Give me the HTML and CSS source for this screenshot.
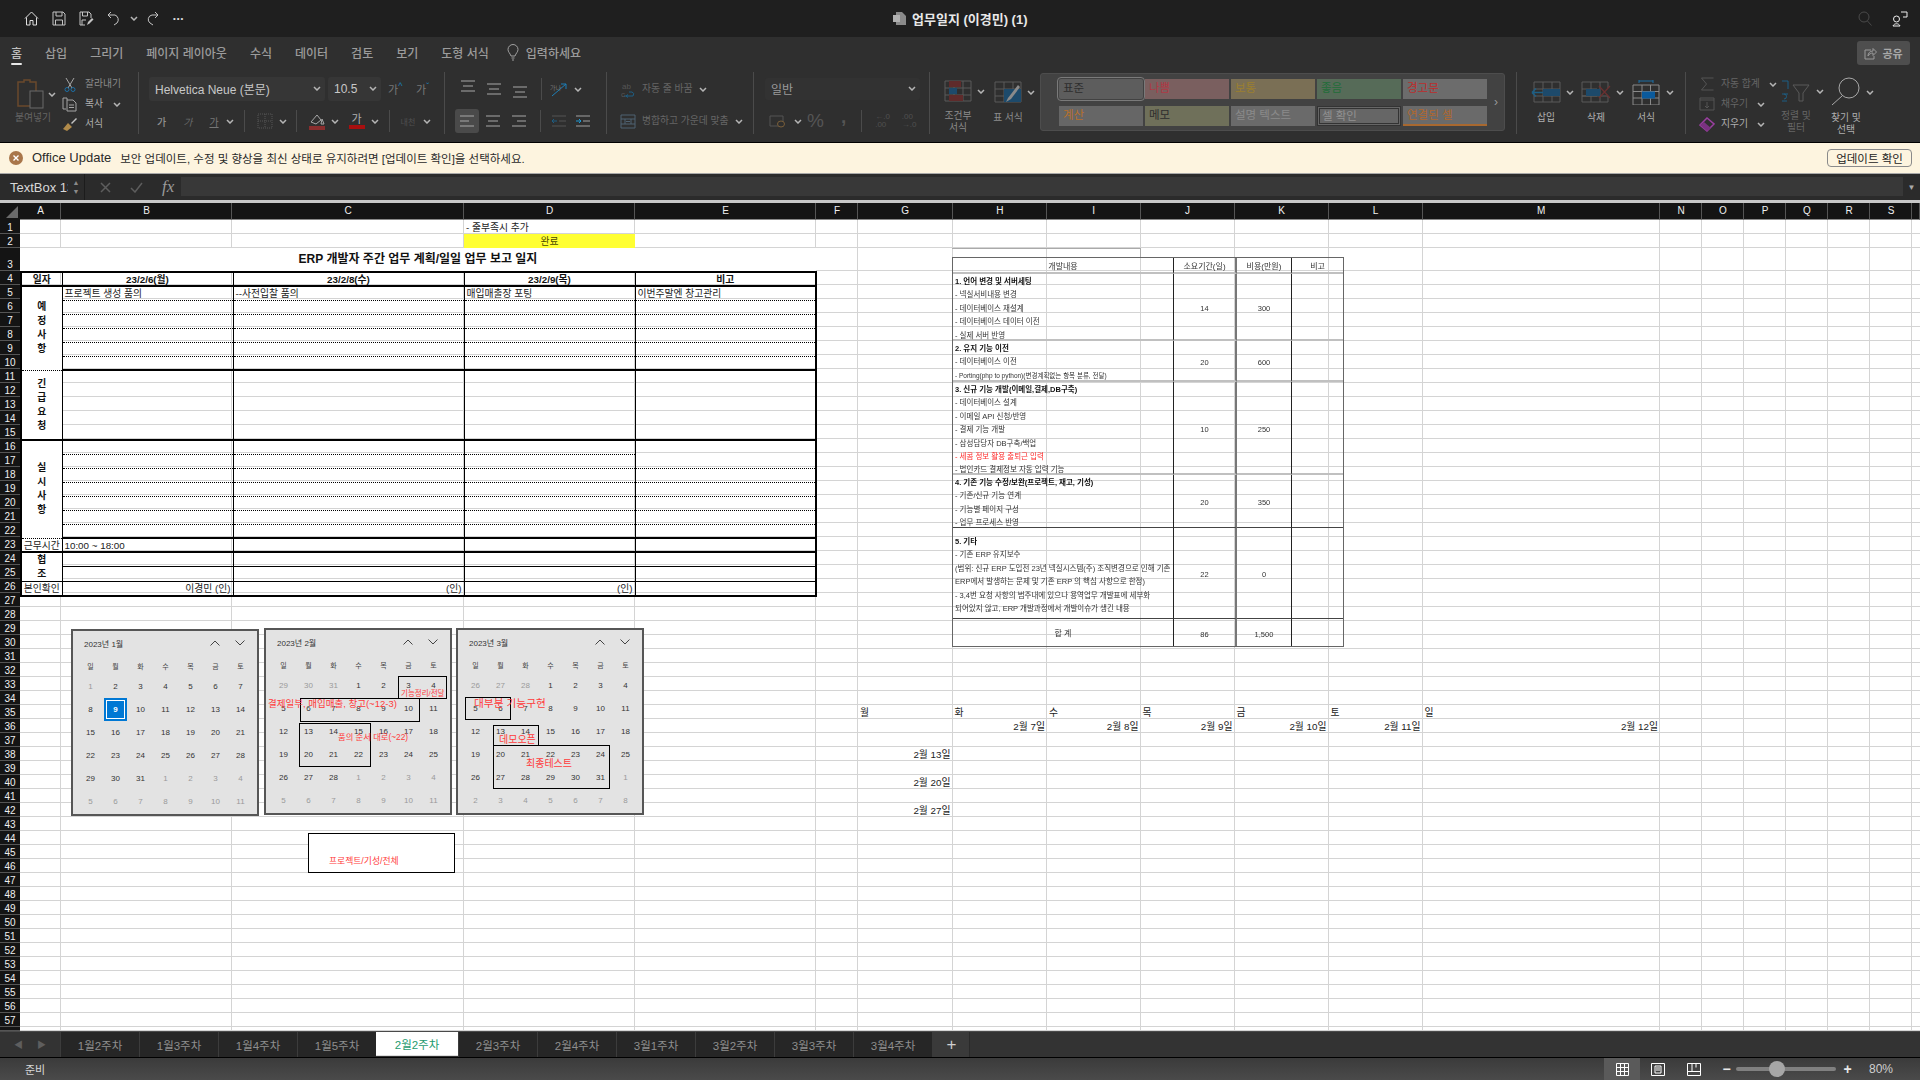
FILE: index.html
```html
<!DOCTYPE html>
<html lang="ko">
<head>
    <meta charset="UTF-8">
    <title>업무일지 (이경민) (1)</title>
    <link rel="stylesheet" href="styles.css">
</head>
<body>
<svg class="defs" width="0" height="0">
    <symbol id="chev" viewBox="0 0 8 5"><path d="M1 1l3 3 3-3" fill="none" stroke="#b5b5b5" stroke-width="1.5"/></symbol>
    <symbol id="lines-l" viewBox="0 0 16 14"><path d="M1 2h14M1 7h9M1 12h14" stroke="#a8a8a8" fill="none"/></symbol>
    <symbol id="lines-c" viewBox="0 0 16 14"><path d="M1 2h14M3 7h10M1 12h14" stroke="#a8a8a8" fill="none"/></symbol>
    <symbol id="lines-r" viewBox="0 0 16 14"><path d="M1 2h14M6 7h9M1 12h14" stroke="#a8a8a8" fill="none"/></symbol>
</svg>

<header class="titlebar">
    <div class="quick">
        <svg class="q-home" width="15" height="15" viewBox="0 0 15 15"><path d="M1 7.500L7.500 1 14 7.500M2.500 6.500V14h3.500V9.500h3V14h3.500V6.500" fill="none" stroke="#e0e0e0"/></svg>
        <svg class="q-save" width="14" height="15" viewBox="0 0 14 15"><path d="M1 1h10l2 2v11H1zM4 1v4h6V1M3.500 14V9h7v5" fill="none" stroke="#c4c4c4"/></svg>
        <svg class="q-saveas" width="15" height="15" viewBox="0 0 15 15"><path d="M1 1h9l2 2v4M6 14H1V1M3.500 1v4h5V1M3 14V9h4" fill="none" stroke="#c4c4c4"/><path d="M8 14l1-3 4-4 1.500 1.500-4 4z" fill="#c4c4c4"/></svg>
        <svg class="q-undo" width="15" height="15" viewBox="0 0 15 15"><path d="M1 4h7a5 5 0 0 1 2 8l-3 2M1 4l3-3M1 4l3 3" fill="none" stroke="#c4c4c4"/></svg>
        <svg class="chev q-chev"><use href="#chev"/></svg>
        <svg class="q-redo" width="13" height="15" viewBox="0 0 13 15"><path d="M12 4H6a4.500 4.500 0 0 0-2 8l3 2M12 4L9 1M12 4L9 7" fill="none" stroke="#c4c4c4"/></svg>
        <span class="q-dots">•••</span>
    </div>
    <div class="doc-name">
        <svg width="13" height="13" viewBox="0 0 13 13"><path d="M3 0h6l4 4v9H3z" fill="#8a8a8a"/><rect y="3" width="7" height="7" fill="#b0b0b0"/></svg>
        업무일지 (이경민) (1)
    </div>
    <div class="title-right">
        <svg width="14" height="15" viewBox="0 0 14 15"><circle cx="6" cy="6" r="5" fill="none" stroke="#4a4a4a"/><path d="M9.500 10l4 4.500" stroke="#4a4a4a"/></svg>
        <svg width="16" height="17" viewBox="0 0 16 17"><circle cx="4.500" cy="9" r="3" fill="none" stroke="#eee"/><path d="M1 16c1-3 6-3 7 0zM9 2h6v5h-4" fill="none" stroke="#eee"/></svg>
    </div>
</header>

<section class="ribbon">
    <nav class="ribbon-tabs">
        <a class="on">홈</a><a>삽입</a><a>그리기</a><a>페이지 레이아웃</a><a>수식</a><a>데이터</a><a>검토</a><a>보기</a><a>도형 서식</a>
        <a class="tell">
            <svg width="12" height="17" viewBox="0 0 12 17"><path d="M4 12C3 9 1 8 1 5.500a5 5 0 0 1 10 0C11 8 9 9 8 12zM4.500 14h3M5 16h2" fill="none" stroke="#a0a0a0"/></svg>
            입력하세요
        </a>
        <span class="share">
            <svg width="13" height="13" viewBox="0 0 13 13"><path d="M4 9c0-3 2-5 5-5V1.500L12.500 5 9 8.500V6C7 6 5 7 4 9zM7 3H1v9h9V9" fill="none" stroke="#9a9a9a"/></svg>
            공유
        </span>
    </nav>

    <div class="ribbon-body">
        <div class="grp g-clip">
            <div class="paste">
                <div class="paste-top">
                    <svg width="28" height="30" viewBox="0 0 28 30"><path d="M1 3h6V1h6v2h6v24H1z" fill="none" stroke="#6b4a2c" stroke-width="1.500"/><rect x="13" y="12" width="13" height="17" fill="#2e2e2e" stroke="#6a6a6a"/></svg>
                    <svg class="chev"><use href="#chev"/></svg>
                </div>
                <span class="lbl dim">붙여넣기</span>
            </div>
            <div class="clip-list">
                <div class="clip-row">
                    <svg width="12" height="15" viewBox="0 0 12 15"><path d="M2 1l6 10M10 1L4 11" stroke="#a5a5a5" fill="none"/><circle cx="3" cy="12.500" r="2" fill="none" stroke="#1d6fa5"/><circle cx="9" cy="12.500" r="2" fill="none" stroke="#1d6fa5"/></svg>
                    <span class="lbl">잘라내기</span>
                </div>
                <div class="clip-row">
                    <svg width="16" height="15" viewBox="0 0 16 15"><path d="M5 3V1H1v11h3M5 3h6l3 3v8H5zM7 8h5M7 10.500h5" fill="none" stroke="#a5a5a5"/></svg>
                    <span class="lbl bright">복사</span><svg class="chev"><use href="#chev"/></svg>
                </div>
                <div class="clip-row">
                    <svg width="16" height="15" viewBox="0 0 16 15"><path d="M1 12l5-6 4 4-5 4z" fill="#b08a4a"/><path d="M9 6l5-5 1 1-5 5z" fill="#c4c4c4"/></svg>
                    <span class="lbl bright">서식</span>
                </div>
            </div>
        </div>

        <div class="grp g-font">
            <div class="g-row">
                <span class="select sel-font">Helvetica Neue (본문)<svg class="chev"><use href="#chev"/></svg></span>
                <span class="select sel-size">10.5<svg class="chev"><use href="#chev"/></svg></span>
                <span class="grow">가<sup>^</sup></span>
                <span class="grow">가<sup>ˇ</sup></span>
            </div>
            <div class="g-row font-tools">
                <b class="fmt">가</b><i class="fmt">가</i><u class="fmt">가</u>
                <svg class="chev"><use href="#chev"/></svg>
                <span class="sep s1"></span>
                <svg class="b-ico" width="16" height="16" viewBox="0 0 16 16"><path d="M1 1h14v14H1zM8 1v14M1 8h14" fill="none" stroke="#565656" stroke-dasharray="1 1"/></svg>
                <svg class="chev"><use href="#chev"/></svg>
                <span class="sep s2"></span>
                <span class="paint">
                    <svg width="16" height="13" viewBox="0 0 16 13"><path d="M2 9l6-7 4 5-5 4zM13 6l2 5h-3z" fill="none" stroke="#a8a8a8"/></svg>
                    <em class="bar bar-fill"></em>
                </span>
                <svg class="chev"><use href="#chev"/></svg>
                <span class="paint p-text">가<em class="bar bar-text"></em></span>
                <svg class="chev"><use href="#chev"/></svg>
                <span class="sep s3"></span>
                <span class="phon">내천</span>
                <svg class="chev"><use href="#chev"/></svg>
            </div>
        </div>

        <div class="grp g-align">
            <div class="g-row align-top">
                <svg class="va-t" width="16" height="14"><use href="#lines-c"/></svg>
                <svg width="16" height="14"><use href="#lines-c"/></svg>
                <svg class="va-b" width="16" height="14"><use href="#lines-c"/></svg>
                <span class="sep"></span>
                <svg class="orient" width="18" height="15" viewBox="0 0 18 15"><path d="M2 14L16 2M11 2h5v5" fill="none" stroke="#1d7fb8"/><text x="0" y="8" class="orient-txt">가나</text></svg>
                <svg class="chev orient-chev"><use href="#chev"/></svg>
            </div>
            <div class="g-row align-bot">
                <span class="al-on"><svg width="16" height="14"><use href="#lines-l"/></svg></span>
                <svg width="16" height="14"><use href="#lines-c"/></svg>
                <svg width="16" height="14"><use href="#lines-r"/></svg>
                <span class="sep"></span>
                <svg class="ind" width="15" height="14" viewBox="0 0 15 14"><path d="M1 2h14M8 7h7M1 12h14" stroke="#555" fill="none"/><path d="M6 7H1l2-2M1 7l2 2" stroke="#1d5f85" fill="none"/></svg>
                <svg class="ind ind-2" width="15" height="14" viewBox="0 0 15 14"><path d="M1 2h14M8 7h7M1 12h14" stroke="#a0a0a0" fill="none"/><path d="M1 7h5L4 5M6 7L4 9" stroke="#1d9ad6" fill="none"/></svg>
            </div>
        </div>

        <div class="grp g-wrap">
            <div class="g-row">
                <svg width="16" height="17" viewBox="0 0 16 17"><path d="M4 15h9q2-3-1-4H9M6 15l2-1.500M6 15l2 1.500" fill="none" stroke="#1d5f85"/><text x="2" y="8" class="abc">ab</text><text x="1" y="16" class="abc">c</text></svg>
                <span class="lbl dim">자동 줄 바꿈</span><svg class="chev"><use href="#chev"/></svg>
            </div>
            <div class="g-row">
                <svg width="16" height="15" viewBox="0 0 16 15"><path d="M1 1h14v13H1zM1 5h14M1 10h14M5 5v5M11 5v5M6 7.500h4" fill="none" stroke="#4f6272"/></svg>
                <span class="lbl dim">병합하고 가운데 맞춤</span><svg class="chev"><use href="#chev"/></svg>
            </div>
        </div>

        <div class="grp g-num">
            <div class="g-row">
                <span class="select sel-num">일반<svg class="chev"><use href="#chev"/></svg></span>
            </div>
            <div class="g-row num-tools">
                <svg width="16" height="13" viewBox="0 0 16 13"><path d="M1 1h13v10H1z" fill="none" stroke="#555"/><ellipse cx="12" cy="9" rx="3.500" ry="3" fill="#2e2e2e" stroke="#7a5f3a"/></svg>
                <svg class="chev"><use href="#chev"/></svg>
                <span class="pct">%</span>
                <span class="comma">,</span>
                <span class="sep"></span>
                <span class="dec"><em>←.0</em><em>.00</em></span>
                <span class="dec"><em>.00</em><em>→.0</em></span>
            </div>
        </div>

        <div class="grp g-style">
            <div class="big b-cond">
                <div class="big-top">
                    <svg width="28" height="22" viewBox="0 0 28 22"><path d="M1 1h26v20H1zM1 8h26M1 15h26M10 1v20M19 1v20" fill="none" stroke="#5a5a5a"/><rect x="5" y="1" width="12" height="6" fill="#5f2b2b"/><rect x="5" y="8" width="8" height="6" fill="#1d4a6b"/><rect x="5" y="15" width="14" height="6" fill="#5f2b2b"/></svg>
                    <svg class="chev"><use href="#chev"/></svg>
                </div>
                <span class="lbl">조건부<br>서식</span>
            </div>
            <div class="big b-table">
                <div class="big-top">
                    <svg width="28" height="22" viewBox="0 0 28 22"><path d="M1 1h26v20H1zM1 8h26M1 15h26M10 1v20M19 1v20" fill="none" stroke="#5a5a5a"/><rect x="10" y="8" width="17" height="13" fill="#1d4a6b"/><path d="M12 21l2-4 10-13 2 2-9 12z" fill="#8a8a8a"/></svg>
                    <svg class="chev"><use href="#chev"/></svg>
                </div>
                <span class="lbl">표 서식</span>
            </div>
            <div class="gallery">
                <div class="styles">
                    <span class="st st-norm">표준</span><span class="st st-bad">나쁨</span><span class="st st-mid">보통</span><span class="st st-good">좋음</span><span class="st st-warn">경고문</span>
                    <span class="st st-calc">계산</span><span class="st st-memo">메모</span><span class="st st-note">설명 텍스트</span><span class="st st-check">셀 확인</span><span class="st st-link">연결된 셀</span>
                </div>
                <span class="more">›</span>
            </div>
        </div>

        <div class="grp g-cells">
            <div class="big">
                <div class="big-top">
                    <svg width="30" height="22" viewBox="0 0 30 22"><path d="M3 1h26v20H3zM3 8h26M3 15h26M12 1v20M21 1v20" fill="none" stroke="#5a5a5a"/><rect x="12" y="8" width="17" height="7" fill="#1d4a6b"/><path d="M1 11.500h11M1 11.500l4-4M1 11.500l4 4" fill="none" stroke="#1d5f85" stroke-width="1.500"/></svg>
                    <svg class="chev"><use href="#chev"/></svg>
                </div>
                <span class="lbl bright">삽입</span>
            </div>
            <div class="big">
                <div class="big-top">
                    <svg width="30" height="22" viewBox="0 0 30 22"><path d="M1 1h26v6M1 15h26v6H1V1M10 1v20M19 1v20M1 8h15M1 15h15" fill="none" stroke="#5a5a5a"/><rect x="5" y="8" width="14" height="7" fill="#1d4a6b"/><path d="M18 5l11 12M29 5L18 17" stroke="#6b3030" stroke-width="1.200"/></svg>
                    <svg class="chev"><use href="#chev"/></svg>
                </div>
                <span class="lbl bright">삭제</span>
            </div>
            <div class="big">
                <div class="big-top">
                    <svg width="30" height="25" viewBox="0 0 30 25"><path d="M8 1h14M8 0v3M22 0v3" stroke="#1d6fa5" fill="none"/><path d="M2 5h26v20H2zM2 11.500h26M2 18h26M11 5v20M19.500 5v20" fill="none" stroke="#8a8a8a"/><rect x="11" y="11.500" width="13" height="7" fill="#0a5a9c"/></svg>
                    <svg class="chev"><use href="#chev"/></svg>
                </div>
                <span class="lbl bright">서식</span>
            </div>
        </div>

        <div class="g-edit">
            <div class="edit-list">
                <div class="clip-row">
                    <svg width="15" height="14" viewBox="0 0 15 14"><path d="M14 1H2l5 6-5 6h12" fill="none" stroke="#555"/></svg>
                    <span class="lbl dim">자동 합계</span><svg class="chev"><use href="#chev"/></svg>
                </div>
                <div class="clip-row">
                    <svg width="16" height="14" viewBox="0 0 16 14"><path d="M1 1h14v12H1zM1 3h14M8 5v6M6 9l2 2 2-2" fill="none" stroke="#555"/></svg>
                    <span class="lbl dim">채우기</span><svg class="chev"><use href="#chev"/></svg>
                </div>
                <div class="clip-row">
                    <svg width="16" height="15" viewBox="0 0 16 15"><path d="M1 8l7-7 7 6-7 7z" fill="none" stroke="#9a3fa0" stroke-width="1.500"/><path d="M5 5l7 6-4 3-7-6z" fill="#7a3280"/></svg>
                    <span class="lbl bright">지우기</span><svg class="chev"><use href="#chev"/></svg>
                </div>
            </div>
            <div class="big">
                <div class="big-top">
                    <svg width="30" height="22" viewBox="0 0 30 22"><path d="M1 1h6v8M1 14h6M1 21h5M3 14a2.500 2.500 0 0 1 0 5" fill="none" stroke="#1d5f85"/><path d="M12 5h16l-6 8v8h-4v-8z" fill="none" stroke="#5a5a5a"/></svg>
                    <svg class="chev"><use href="#chev"/></svg>
                </div>
                <span class="lbl dim">정렬 및<br>필터</span>
            </div>
            <div class="big">
                <div class="big-top">
                    <svg width="30" height="30" viewBox="0 0 30 30"><circle cx="18" cy="11" r="10" fill="none" stroke="#a8a8a8"/><path d="M11 19L1 28" stroke="#a8a8a8"/></svg>
                    <svg class="chev"><use href="#chev"/></svg>
                </div>
                <span class="lbl bright">찾기 및<br>선택</span>
            </div>
        </div>
    </div>
</section>

<section class="update-bar">
    <svg width="14" height="14" viewBox="0 0 14 14"><circle cx="7" cy="7" r="7" fill="#a9764a"/><path d="M4.500 4.500l5 5M9.500 4.500l-5 5" stroke="#fff" stroke-width="1.400"/></svg>
    <strong>Office Update</strong>
    <span>보안 업데이트, 수정 및 향상을 최신 상태로 유지하려면 [업데이트 확인]을 선택하세요.</span>
    <button>업데이트 확인</button>
</section>

<section class="formula-bar">
    <div class="name-box"><span>TextBox 13</span></div>
    <div class="spin"><i>▲</i><i>▼</i></div>
    <div class="fx-btns">
        <svg width="11" height="11" viewBox="0 0 11 11"><path d="M1 1l9 9M10 1l-9 9" stroke="#5d5d5d" stroke-width="1.500"/></svg>
        <svg width="13" height="11" viewBox="0 0 13 11"><path d="M1 6l4 4 7-9" fill="none" stroke="#5d5d5d" stroke-width="1.500"/></svg>
        <em>fx</em>
    </div>
    <div class="fx-input"></div>
    <span class="fx-drop">▼</span>
</section>

<main class="sheet">
    <div class="corner"></div>
    <div class="ch">A</div><div class="ch">B</div><div class="ch">C</div><div class="ch">D</div><div class="ch">E</div><div class="ch">F</div><div class="ch">G</div><div class="ch">H</div><div class="ch">I</div><div class="ch">J</div><div class="ch">K</div><div class="ch">L</div><div class="ch">M</div><div class="ch">N</div><div class="ch">O</div><div class="ch">P</div><div class="ch">Q</div><div class="ch">R</div><div class="ch">S</div><div class="ch ch-end"></div>

    <div class="rh">1</div><div class="rh">2</div><div class="rh rh-tall">3</div><div class="rh">4</div><div class="rh">5</div><div class="rh">6</div><div class="rh">7</div><div class="rh">8</div><div class="rh">9</div><div class="rh">10</div>
    <div class="rh">11</div><div class="rh">12</div><div class="rh">13</div><div class="rh">14</div><div class="rh">15</div><div class="rh">16</div><div class="rh">17</div><div class="rh">18</div><div class="rh">19</div><div class="rh">20</div>
    <div class="rh">21</div><div class="rh">22</div><div class="rh">23</div><div class="rh">24</div><div class="rh">25</div><div class="rh">26</div><div class="rh">27</div><div class="rh">28</div><div class="rh">29</div><div class="rh">30</div>
    <div class="rh">31</div><div class="rh">32</div><div class="rh">33</div><div class="rh">34</div><div class="rh">35</div><div class="rh">36</div><div class="rh">37</div><div class="rh">38</div><div class="rh">39</div><div class="rh">40</div>
    <div class="rh">41</div><div class="rh">42</div><div class="rh">43</div><div class="rh">44</div><div class="rh">45</div><div class="rh">46</div><div class="rh">47</div><div class="rh">48</div><div class="rh">49</div><div class="rh">50</div>
    <div class="rh">51</div><div class="rh">52</div><div class="rh">53</div><div class="rh">54</div><div class="rh">55</div><div class="rh">56</div><div class="rh">57</div><div class="rh"></div>

    <div class="cell note">- 줄부족시 추가</div>
    <div class="cell done">완료</div>
    <div class="cell report-title">ERP 개발자 주간 업무 계획/일일 업무 보고 일지</div>

    <table class="work">
        <colgroup><col class="w-a"><col class="w-b"><col class="w-c"><col class="w-b"><col class="w-e"></colgroup>
        <tr class="head thick"><td>일자</td><td>23/2/6(월)</td><td>23/2/8(수)</td><td>23/2/9(목)</td><td>비고</td></tr>
        <tr class="dot"><td rowspan="6" class="side">예<br>정<br>사<br>항</td><td>프로젝트 생성 품의</td><td>--사전입찰 품의</td><td>매입매출장 포팅</td><td>이번주말엔 창고관리</td></tr>
        <tr class="dot"><td></td><td></td><td></td><td></td></tr>
        <tr class="dot"><td></td><td></td><td></td><td></td></tr>
        <tr class="dot"><td></td><td></td><td></td><td></td></tr>
        <tr class="dot"><td></td><td></td><td></td><td></td></tr>
        <tr class="thick"><td></td><td></td><td></td><td></td></tr>
        <tr><td rowspan="5" class="side">긴<br>급<br>요<br>청</td><td></td><td></td><td></td><td></td></tr>
        <tr><td></td><td></td><td></td><td></td></tr>
        <tr><td></td><td></td><td></td><td></td></tr>
        <tr><td></td><td></td><td></td><td></td></tr>
        <tr class="thick"><td></td><td></td><td></td><td></td></tr>
        <tr class="dot"><td rowspan="7" class="side">실<br>시<br>사<br>항</td><td></td><td></td><td></td><td class="plain"></td></tr>
        <tr class="dot"><td></td><td></td><td></td><td></td></tr>
        <tr class="dot"><td></td><td></td><td></td><td></td></tr>
        <tr class="dot"><td></td><td></td><td></td><td></td></tr>
        <tr class="dot"><td></td><td></td><td></td><td></td></tr>
        <tr class="dot"><td></td><td></td><td></td><td></td></tr>
        <tr class="thick"><td></td><td></td><td></td><td></td></tr>
        <tr class="thick"><td class="label">근무시간</td><td>10:00 ~ 18:00</td><td></td><td></td><td></td></tr>
        <tr class="thin"><td rowspan="2" class="side side-b">협<br>조</td><td></td><td></td><td></td><td></td></tr>
        <tr class="thin"><td></td><td></td><td></td><td></td></tr>
        <tr class="thick"><td class="label">본인확인</td><td class="right">이경민 (인)</td><td class="right">(인)</td><td class="right">(인)</td><td></td></tr>
    </table>

    <div class="cell r35 c-g">월</div><div class="cell r35 c-h">화</div><div class="cell r35 c-i">수</div><div class="cell r35 c-j">목</div><div class="cell r35 c-k">금</div><div class="cell r35 c-l">토</div><div class="cell r35 c-m">일</div>
    <div class="cell date r36 c-h">2월 7일</div><div class="cell date r36 c-i">2월 8일</div><div class="cell date r36 c-j">2월 9일</div><div class="cell date r36 c-k">2월 10일</div><div class="cell date r36 c-l">2월 11일</div><div class="cell date r36 c-m">2월 12일</div>
    <div class="cell date r38 c-g">2월 13일</div>
    <div class="cell date r40 c-g">2월 20일</div>
    <div class="cell date r42 c-g">2월 27일</div>

    <!-- dev plan, floats over the cells -->
    <div class="dev-top"></div>
    <div class="dev">
        <div class="dv dv-head">개발내용</div><div class="dv dv-head">소요기간(일)</div><div class="dv dv-head">비용(만원)</div><div class="dv dv-head">비고</div>

        <div class="dv dv-text dv-sec"><b>1. 언어 변경 및 서버세팅</b><br>- 넥실서비내용 변경<br>- 데이터베이스 재설계<br>- 데이터베이스 데이터 이전<br>- 실제 서버 반영</div>
        <div class="dv dv-sec dv-val">14</div><div class="dv dv-sec dv-val">300</div><div class="dv dv-sec"></div>

        <div class="dv dv-text dv-sec"><b>2. 유지 기능 이전</b><br>- 데이터베이스 이전<br><small>- Porting(php to python)(변경계획없는 항목 분류, 전달)</small></div>
        <div class="dv dv-sec dv-val">20</div><div class="dv dv-sec dv-val">600</div><div class="dv dv-sec"></div>

        <div class="dv dv-text dv-sec"><b>3. 신규 기능 개발(이메일,결제,DB구축)</b><br>- 데이터베이스 설계<br>- 이메일 API 신청/반영<br>- 결제 기능 개발<br>- 삼성담당자 DB구축/백업<br><span class="dv-red">- 세콤 정보 활용 출퇴근 입력</span><br>- 법인카드 결제정보 자동 입력 기능</div>
        <div class="dv dv-sec dv-val">10</div><div class="dv dv-sec dv-val">250</div><div class="dv dv-sec"></div>

        <div class="dv dv-text dv-line"><b>4. 기존 기능 수정/보완(프로젝트, 재고, 기성)</b><br>- 기존/신규 기능 연계<br>- 기능별 페이지 구성<br>- 업무 프로세스 반영</div>
        <div class="dv dv-line dv-val">20</div><div class="dv dv-line dv-val">350</div><div class="dv dv-line"></div>

        <div class="dv dv-text dv-line dv-last"><b>5. 기타</b><br>- 기존 ERP 유지보수<br>(범위: 신규 ERP 도입전 23년 넥실시스템(주) 조직변경으로 인해 기존<br>ERP에서 발생하는 문제 및 기존 ERP 의 핵심 사항으로 한정)<br>- 3,4번 요청 사항의 범주내에 있으나 용역업무 개발표에 세부화<br>되어있지 않고, ERP 개발과정에서 개발이슈가 생긴 내용</div>
        <div class="dv dv-line dv-val">22</div><div class="dv dv-line dv-val">0</div><div class="dv dv-line"></div>

        <div class="dv dv-total">합 계</div><div class="dv dv-val">86</div><div class="dv dv-val">1,500</div><div class="dv"></div>
    </div>

    <!-- calendars pasted on the sheet -->
    <div class="cal cal-jan">
        <div class="cal-head"><span>2023년 1월</span><svg width="10" height="6" viewBox="0 0 10 6"><path d="M0.500 5.500L5 1l4.500 4.500" fill="none" stroke="#444"/></svg><svg width="10" height="6" viewBox="0 0 10 6"><path d="M0.500 0.500L5 5l4.500-4.500" fill="none" stroke="#444"/></svg></div>
        <div class="days">
            <span class="wd">일</span><span class="wd">월</span><span class="wd">화</span><span class="wd">수</span><span class="wd">목</span><span class="wd">금</span><span class="wd">토</span>
            <span class="g">1</span><span>2</span><span>3</span><span>4</span><span>5</span><span>6</span><span>7</span>
            <span>8</span><span class="today">9</span><span>10</span><span>11</span><span>12</span><span>13</span><span>14</span>
            <span>15</span><span>16</span><span>17</span><span>18</span><span>19</span><span>20</span><span>21</span>
            <span>22</span><span>23</span><span>24</span><span>25</span><span>26</span><span>27</span><span>28</span>
            <span>29</span><span>30</span><span>31</span><span class="g">1</span><span class="g">2</span><span class="g">3</span><span class="g">4</span>
            <span class="g">5</span><span class="g">6</span><span class="g">7</span><span class="g">8</span><span class="g">9</span><span class="g">10</span><span class="g">11</span>
        </div>
    </div>
    <div class="cal cal-feb">
        <div class="cal-head"><span>2023년 2월</span><svg width="10" height="6" viewBox="0 0 10 6"><path d="M0.500 5.500L5 1l4.500 4.500" fill="none" stroke="#444"/></svg><svg width="10" height="6" viewBox="0 0 10 6"><path d="M0.500 0.500L5 5l4.500-4.500" fill="none" stroke="#444"/></svg></div>
        <div class="days">
            <span class="wd">일</span><span class="wd">월</span><span class="wd">화</span><span class="wd">수</span><span class="wd">목</span><span class="wd">금</span><span class="wd">토</span>
            <span class="g">29</span><span class="g">30</span><span class="g">31</span><span>1</span><span>2</span><span>3</span><span>4</span>
            <span>5</span><span>6</span><span>7</span><span>8</span><span>9</span><span>10</span><span>11</span>
            <span>12</span><span>13</span><span>14</span><span>15</span><span>16</span><span>17</span><span>18</span>
            <span>19</span><span>20</span><span>21</span><span>22</span><span>23</span><span>24</span><span>25</span>
            <span>26</span><span>27</span><span>28</span><span class="g">1</span><span class="g">2</span><span class="g">3</span><span class="g">4</span>
            <span class="g">5</span><span class="g">6</span><span class="g">7</span><span class="g">8</span><span class="g">9</span><span class="g">10</span><span class="g">11</span>
        </div>
    </div>
    <div class="cal cal-mar">
        <div class="cal-head"><span>2023년 3월</span><svg width="10" height="6" viewBox="0 0 10 6"><path d="M0.500 5.500L5 1l4.500 4.500" fill="none" stroke="#444"/></svg><svg width="10" height="6" viewBox="0 0 10 6"><path d="M0.500 0.500L5 5l4.500-4.500" fill="none" stroke="#444"/></svg></div>
        <div class="days">
            <span class="wd">일</span><span class="wd">월</span><span class="wd">화</span><span class="wd">수</span><span class="wd">목</span><span class="wd">금</span><span class="wd">토</span>
            <span class="g">26</span><span class="g">27</span><span class="g">28</span><span>1</span><span>2</span><span>3</span><span>4</span>
            <span>5</span><span>6</span><span>7</span><span>8</span><span>9</span><span>10</span><span>11</span>
            <span>12</span><span>13</span><span>14</span><span>15</span><span>16</span><span>17</span><span>18</span>
            <span>19</span><span>20</span><span>21</span><span>22</span><span>23</span><span>24</span><span>25</span>
            <span>26</span><span>27</span><span>28</span><span>29</span><span>30</span><span>31</span><span class="g">1</span>
            <span class="g">2</span><span class="g">3</span><span class="g">4</span><span class="g">5</span><span class="g">6</span><span class="g">7</span><span class="g">8</span>
        </div>
    </div>

    <div class="box m-feb1"></div>
    <div class="box m-feb2"></div>
    <div class="box m-feb3"></div>
    <div class="box m-mar1"></div>
    <div class="box m-mar2"></div>
    <div class="box m-mar3"></div>
    <div class="box m-solo"></div>
    <span class="red t-feb1">기능정리/전달</span>
    <span class="red t-feb2">결제일부, 매입매출, 창고(~12-3)</span>
    <span class="red t-feb3">품의 순서 대로(~22)</span>
    <span class="red t-mar1">대부분 기능구현</span>
    <span class="red t-mar2">데모오픈</span>
    <span class="red t-mar3">최종테스트</span>
    <span class="red t-solo">프로젝트/기성/전체</span>
</main>

<nav class="sheet-tabs">
    <div class="tab-arrows"><i>◀</i><i>▶</i></div>
    <a>1월2주차</a><a>1월3주차</a><a>1월4주차</a><a>1월5주차</a><a class="active">2월2주차</a><a>2월3주차</a><a>2월4주차</a><a>3월1주차</a><a>3월2주차</a><a>3월3주차</a><a>3월4주차</a>
    <span class="add">+</span>
</nav>

<footer class="status">
    <span class="ready">준비</span>
    <div class="views">
        <span class="view on">
            <svg width="13" height="13" viewBox="0 0 13 13"><path d="M.5.500h12v12H.5zM.5 4.500h12M.5 8.500h12M4.500.5v12M8.500.5v12" fill="none" stroke="#fff"/></svg>
        </span>
        <span class="view">
            <svg width="14" height="13" viewBox="0 0 14 13"><path d="M.5.500h13v12H.5zM4 3h6v7H4zM5 5h4M5 7h4" fill="none" stroke="#fff"/></svg>
        </span>
        <span class="view">
            <svg width="14" height="13" viewBox="0 0 14 13"><path d="M.5.500h13v12H.5zM.5 8.500h13M5 .5v8M9 .5v4" fill="none" stroke="#fff"/></svg>
        </span>
    </div>
    <div class="zoom">
        <b>−</b>
        <span class="track"><span class="knob"></span></span>
        <b>+</b>
        <span class="pct-z">80%</span>
    </div>
</footer>
</body>
</html>
```

FILE: styles.css
```css
* {
    box-sizing: border-box;
}

html, body {
    margin: 0;
    height: 100%;
}

body {
    width: 1920px;
    height: 1080px;
    overflow: hidden;
    display: flex;
    flex-direction: column;
    background: #303030;
    font-family: "Liberation Sans", "Noto Sans CJK KR", sans-serif;
    color: #aaa;
}

svg {
    display: block;
    flex: none;
}

.defs {
    position: absolute;
}

.chev {
    width: 8px;
    height: 5px;
}

/* title bar */
.titlebar {
    height: 37px;
    flex: none;
    display: flex;
    align-items: center;
    background: #1f1f1f;
    position: relative;
}

.quick {
    display: flex;
    align-items: center;
    padding-left: 24px;
}

.q-save { margin-left: 13px; }
.q-saveas { margin-left: 13px; }
.q-undo { margin-left: 13px; }
.q-chev { margin-left: 8px; }
.q-redo { margin-left: 8px; }

.q-dots {
    margin-left: 14px;
    font-size: 8px;
    color: #ddd;
    letter-spacing: 1px;
}

.doc-name {
    position: absolute;
    left: 893px;
    top: 0;
    height: 37px;
    display: flex;
    align-items: center;
    gap: 6px;
    font-size: 13px;
    font-weight: 700;
    color: #e8e8e8;
}

.title-right {
    margin-left: auto;
    padding-right: 12px;
    display: flex;
    align-items: center;
    gap: 20px;
}

/* ribbon */
.ribbon {
    height: 105px;
    flex: none;
    background: #2f2f2f;
}

.ribbon-tabs {
    height: 35px;
    display: flex;
    align-items: center;
    gap: 23px;
    padding: 0 10px 4px 11px;
    font-size: 12px;
    color: #9c9c9c;
    font-weight: 500;
}

.ribbon-tabs .on {
    color: #bdbdbd;
    position: relative;
}

.ribbon-tabs .on::after {
    content: "";
    position: absolute;
    left: 0;
    right: 0;
    bottom: -4px;
    height: 2px;
    border-radius: 1px;
    background: #e8e8e8;
}

.tell {
    display: flex;
    align-items: center;
    gap: 7px;
    margin-left: -5px;
}

.share {
    margin-left: auto;
    width: 53px;
    height: 24px;
    display: flex;
    align-items: center;
    justify-content: center;
    gap: 5px;
    margin-top: 1px;
    border-radius: 3px;
    background: #4e4e4e;
    color: #a8a8a8;
    font-size: 11px;
    font-weight: 700;
}

.ribbon-body {
    height: 62px;
    display: flex;
}

.grp {
    flex: none;
    height: 62px;
    display: flex;
    border-right: 1px solid #4b4b4b;
}

.lbl {
    font-size: 9.800px;
    line-height: 12px;
    color: #8c8c8c;
    white-space: nowrap;
    text-align: center;
}

.lbl.dim { color: #666; }
.lbl.bright { color: #b0b0b0; }

.g-row {
    height: 24px;
    display: flex;
    align-items: center;
}

.sep {
    width: 1px;
    height: 22px;
    background: #4b4b4b;
    flex: none;
}

/* clipboard */
.g-clip {
    width: 139px;
    padding-left: 15px;
}

.paste {
    width: 47px;
    padding-top: 5px;
}

.paste-top {
    display: flex;
    align-items: center;
    gap: 3px;
    margin-left: 2px;
    height: 34px;
}

.paste .lbl {
    display: block;
    text-align: left;
    margin-top: 1px;
}

.clip-list,
.edit-list {
    display: flex;
    flex-direction: column;
    padding-top: 2px;
}

.clip-row {
    height: 22px;
    display: flex;
    align-items: center;
    gap: 7px;
}

.clip-row svg:first-child {
    width: 16px;
}

.clip-row .chev {
    margin-left: 3px;
}

/* font */
.g-font {
    width: 306px;
    padding-left: 10px;
    flex-direction: column;
    padding-top: 5px;
    gap: 8px;
}

.select {
    height: 24px;
    display: flex;
    align-items: center;
    justify-content: space-between;
    padding: 0 4px 1px 6px;
    border-radius: 3px;
    background: #363636;
    font-size: 12px;
    color: #c8c8c8;
    margin-right: 3px;
}

.sel-font { width: 176px; }
.sel-size { width: 53px; }

.grow {
    font-size: 11px;
    color: #777;
    margin-left: 4px;
    width: 24px;
    display: flex;
}

.grow sup {
    font-size: 9px;
    line-height: 10px;
    color: #1d7fb8;
}

.fmt {
    font-size: 10px;
    font-style: normal;
    color: #8a8a8a;
    margin: 0 8px;
}

i.fmt { font-style: italic; margin-left: 9px; margin-right: 9px; color: #6a6a6a; }
b.fmt { color: #8f8f8f; font-weight: 500; }
u.fmt { color: #777; margin-right: 7px; }

.font-tools .s1 { margin: 0 12px 0 10px; }
.font-tools .s2 { margin: 0 12px 0 9px; }
.font-tools .s3 { margin: 0 11px 0 10px; }
.b-ico { margin-right: 6px; }

.paint {
    width: 16px;
    margin-right: 6px;
    display: flex;
    flex-direction: column;
}

.p-text {
    margin-left: 10px;
    font-size: 11px;
    line-height: 12px;
    color: #b0b0b0;
    text-align: center;
    align-items: center;
}

.bar {
    display: block;
    width: 16px;
    height: 4px;
}

.bar-fill { background: #8a2e2e; }
.bar-text { background: #a80f0f; }

.phon {
    font-size: 8px;
    color: #4f4f4f;
    margin-right: 8px;
}

/* alignment */
.g-align {
    width: 162px;
    padding: 5px 0 0 15px;
    flex-direction: column;
    gap: 8px;
}

.align-top,
.align-bot {
    gap: 10px;
}

.align-top .sep { margin-left: 3px; }
.orient { margin-left: -2px; }
.orient-chev { margin-left: -4px; }

.va-t { margin-top: -6px; }
.va-b { margin-top: 6px; }

.orient-txt {
    font-size: 6px;
    fill: #777;
}

.al-on {
    width: 24px;
    height: 24px;
    margin-left: -5px;
    margin-right: -4px;
    border-radius: 3px;
    background: #4a4a4a;
    display: flex;
    align-items: center;
    justify-content: center;
}

.align-bot .sep { margin-left: 3px; }
.ind-2 { margin-left: -1px; }

/* wrap */
.g-wrap {
    width: 147px;
    padding: 5px 0 0 13px;
    flex-direction: column;
    gap: 8px;
}

.g-wrap .g-row { gap: 6px; }

.abc {
    font-size: 8px;
    fill: #555;
}

/* number */
.g-num {
    width: 176px;
    padding: 5px 0 0 11px;
    flex-direction: column;
    gap: 8px;
}

.sel-num {
    width: 155px;
    height: 22px;
    background: #323232;
    color: #9a9a9a;
}

.num-tools {
    padding-left: 4px;
    gap: 9px;
}

.num-tools .sep { margin: 0 4px 0 6px; }

.pct {
    font-size: 19px;
    color: #555;
    margin-left: -4px;
}

.comma {
    font-size: 19px;
    font-weight: 700;
    color: #555;
    margin: -8px 0 0 8px;
}

.dec {
    display: flex;
    flex-direction: column;
    font-size: 8px;
    line-height: 8px;
    color: #4f4f4f;
    margin-right: 3px;
}

.dec em {
    font-style: normal;
}

/* big buttons: icon with its chevron over a centered label */
.big {
    width: 30px;
    flex: none;
    display: flex;
    flex-direction: column;
    align-items: center;
    padding-top: 8px;
    margin-right: 20px;
}

.big-top {
    width: 100%;
    height: 24px;
    display: flex;
    gap: 5px;
    align-items: center;
    margin-bottom: 8px;
}

/* styles */
.g-style {
    width: 587px;
    padding-left: 14px;
}

.b-cond { width: 28px; margin-right: 22px; }
.b-table { width: 28px; margin-right: 18px; }

.gallery {
    width: 465px;
    height: 58px;
    margin-top: 1px;
    border: 1px solid #4d4d4d;
    border-radius: 3px;
    background: #424242;
    display: flex;
    align-items: center;
    padding-left: 18px;
}

.styles {
    display: grid;
    grid-template-columns: repeat(5, 84px);
    grid-auto-rows: 20px;
    column-gap: 2px;
    row-gap: 7px;
}

.st {
    font-size: 11.500px;
    line-height: 18px;
    padding-left: 4px;
    white-space: nowrap;
}

.st-norm { background: #5d5d5d; color: #2e2e2e; outline: 1px solid #7a7a7a; outline-offset: 1px; border-radius: 2px; }
.st-bad { background: #7a5f5f; color: #b03844; }
.st-mid { background: #7a6f55; color: #9a7f2f; }
.st-good { background: #566b58; color: #1f6d38; }
.st-warn { background: #6c6c6c; color: #bc2c2c; }
.st-calc { background: #666; color: #b8702c; }
.st-memo { background: #6f705a; color: #2e2e2e; }
.st-note { background: #6a6a6a; color: #8a8a8a; }
.st-check { background: #666; color: #929292; border: 3px double #333; line-height: 14px; padding-left: 2px; }
.st-link { background: #6a6a6a; color: #b0682f; border-bottom: 2px solid #a8682f; }

.more {
    margin-left: 7px;
    color: #999;
    font-size: 12px;
}

/* cells */
.g-cells {
    width: 169px;
    padding-left: 14px;
}

/* editing */
.g-edit {
    display: flex;
    padding-left: 13px;
}

.edit-list {
    width: 82px;
}

.edit-list .clip-row {
    gap: 6px;
}

/* office update */
.update-bar {
    height: 31px;
    flex: none;
    display: flex;
    align-items: center;
    margin-top: 1px;
    padding: 0 8px 1px 9px;
    background: #fdf4df;
    border-bottom: 1px solid #a8a8a8;
    box-shadow: 0 -1px 0 #000;
    color: #2a2a2a;
    font-size: 11.500px;
}

.update-bar strong {
    margin-left: 9px;
    font-size: 13px;
    font-weight: 400;
    margin-right: 9px;
}

.update-bar button {
    margin-left: auto;
    height: 18px;
    width: 85px;
    padding: 0;
    border: 1px solid #8a8a8a;
    border-radius: 4px;
    background: #fdf4df;
    font: inherit;
    color: #222;
}

/* formula bar */
.formula-bar {
    height: 26px;
    flex: none;
    display: flex;
    align-items: center;
    background: #2b2b2b;
}

.name-box {
    width: 68px;
    padding-left: 10px;
    overflow: hidden;
    white-space: nowrap;
    font-size: 13px;
    color: #d8d8d8;
}

.spin {
    width: 17px;
    height: 26px;
    display: flex;
    flex-direction: column;
    justify-content: center;
    align-items: center;
    border-right: 1px solid #1c1c1c;
    font-size: 7px;
    line-height: 9px;
    color: #8a8a8a;
}

.spin i,
.tab-arrows i {
    font-style: normal;
}

.fx-btns {
    width: 96px;
    display: flex;
    align-items: center;
    padding-left: 15px;
    gap: 19px;
}

.fx-btns em {
    font-family: "Liberation Serif", serif;
    font-size: 17px;
    color: #9a9a9a;
}

.fx-input {
    flex: 1;
    height: 19px;
    background: #383838;
    margin-top: -1px;
}

.fx-drop {
    width: 17px;
    text-align: center;
    font-size: 8px;
    color: #aaa;
}

/* sheet */
.sheet {
    flex: none;
    height: 828px;
    margin-top: 3px;
    background: #fff;
    position: relative;
    overflow: hidden;
    display: grid;
    grid-template-columns: 20px 41px 171px 232px 171px 181px 42px 94.5px 94.5px 93.5px 94px 94px 94px 237.5px 42px 42px 42px 42px 42px 42px 8px;
    grid-template-rows: 17px 14px 14px 23px repeat(54, 14px) 4px;
    box-shadow: 0 -3px 0 #c8c8c8;
}

.corner {
    background: #141414;
    position: relative;
    z-index: 2;
}

.corner::after {
    content: "";
    position: absolute;
    right: 2px;
    bottom: 2px;
    border-left: 12px solid transparent;
    border-bottom: 12px solid #6a6a6a;
}

.ch {
    position: relative;
    background: #141414;
    border-right: 1px solid #555;
    border-bottom: 1px solid #888;
    padding-left: 1px;
    color: #f0f0f0;
    font-size: 10px;
    line-height: 16px;
    text-align: center;
}

.ch::after {
    content: "";
    position: absolute;
    top: 17px;
    right: -1px;
    width: 1px;
    height: 820px;
    background: #d4d4d4;
}

.ch-end::after {
    display: none;
}

.rh {
    grid-column: 1;
    position: relative;
    background: #141414;
    border-bottom: 1px solid #555;
    color: #f0f0f0;
    font-size: 10px;
    line-height: 15px;
    text-align: center;
}

.rh::after {
    content: "";
    position: absolute;
    left: 20px;
    bottom: -1px;
    width: 1900px;
    height: 1px;
    background: #d4d4d4;
}

.rh-tall {
    padding-top: 9px;
}

.cell {
    position: relative;
    font-size: 9.800px;
    line-height: 16px;
    color: #222;
    padding: 0 2px;
    white-space: nowrap;
    z-index: 1;
}

.note { grid-row: 2; grid-column: 5; }

.done {
    grid-row: 3;
    grid-column: 5;
    background: #ffff33;
    text-align: center;
    color: #4a4a00;
    height: 14px;
}

.report-title {
    grid-row: 4;
    grid-column: 2 / 7;
    background: #fff;
    text-align: center;
    font-size: 12px;
    font-weight: 700;
    line-height: 23px;
    color: #111;
}

.r35 { grid-row: 36; }
.r36 { grid-row: 37; }
.r38 { grid-row: 39; }
.r40 { grid-row: 41; }
.r42 { grid-row: 43; }
.c-g { grid-column: 8; }
.c-h { grid-column: 9; }
.c-i { grid-column: 10; }
.c-j { grid-column: 11; }
.c-k { grid-column: 12; }
.c-l { grid-column: 13; }
.c-m { grid-column: 14; }

.date {
    text-align: right;
}

/* weekly report */
.work {
    grid-column: 2 / 7;
    grid-row: 5 / span 23;
    position: relative;
    z-index: 1;
    width: 795px;
    height: 322px;
    table-layout: fixed;
    border-collapse: collapse;
    border: 2px solid #000;
    font-size: 9.800px;
    color: #222;
}

.w-a { width: 41px; }
.w-b { width: 171px; }
.w-c { width: 231px; }
.w-e { width: 181px; }

.work tr {
    height: 14px;
}

.work td {
    padding: 1px 2px 0;
    line-height: 11px;
    border-right: 1px solid #000;
    white-space: nowrap;
    overflow: hidden;
}

.work tr.dot td {
    border-bottom: 1px dotted #000;
}

.work tr.dot td.plain {
    border-bottom: none;
}

.work tr.thick td {
    border-bottom: 2px solid #000;
}

.work tr.thin td {
    border-bottom: 1px solid #000;
}

.work td.side {
    background: #fff;
    padding: 0 2px;
    text-align: center;
    font-weight: 700;
    line-height: 14px;
    border-bottom: 2px solid #000;
    color: #111;
}

.work td.side-b {
    border-bottom: 1px solid #000;
}

.work td.label {
    background: #fff;
    padding: 1px 0 0;
    text-align: center;
}

.work td.right {
    text-align: right;
}

.head td {
    text-align: center;
    font-weight: 700;
    color: #111;
}

/* floating dev plan */
.dev-top {
    position: absolute;
    left: 952px;
    top: 45px;
    width: 189px;
    height: 10px;
    border-top: 1px solid #aaa;
    border-right: 1px solid #aaa;
}

.dev {
    position: absolute;
    left: 952px;
    top: 54px;
    width: 392px;
    height: 390px;
    display: grid;
    grid-template-columns: 221px 63px 55px 1fr;
    grid-template-rows: 16px 67px 41px 93px 53px 91px 1fr;
    border: 1px solid #666;
    font-size: 7.500px;
    color: #333;
    filter: blur(.4px);
}

.dv {
    display: flex;
    align-items: center;
    justify-content: center;
    border-right: 1px solid #222;
    white-space: nowrap;
}

.dv:nth-child(4n) {
    border-right: none;
}

.dv:nth-child(4n + 2) {
    border-right: 2px solid #777;
}

.dv-head {
    font-size: 8px;
    border-bottom: 2px solid #c0c0c0;
}

.dv-val {
    padding-top: 3px;
}

.dv-text {
    display: block;
    padding: 1px 0 0 2px;
    line-height: 13.400px;
    justify-content: flex-start;
    white-space: nowrap;
}

.dv-text b {
    color: #111;
}

.dv-text small {
    font-size: 6.500px;
}

.dv-red {
    color: #ff2a2a;
}

.dv-sec {
    border-bottom: 2px solid #c0c0c0;
}

.dv-line {
    border-bottom: 1px solid #444;
}

.dv-last {
    padding-top: 7px;
}

.dv-total {
    font-size: 8px;
}

/* calendars */
.cal {
    position: absolute;
    top: 425px;
    width: 188px;
    height: 187px;
    padding: 0 6px 0 5px;
    background: #e3e3e3;
    border: 2px solid #565656;
}

.cal-jan { left: 71px; top: 426px; }
.cal-feb { left: 264px; }
.cal-mar { left: 456px; }

.cal-head {
    height: 26px;
    display: flex;
    align-items: center;
    gap: 15px;
    padding: 0 6px 2px 6px;
    font-size: 8px;
    color: #333;
}

.cal-head span {
    margin-right: auto;
}

.days {
    display: grid;
    grid-template-columns: repeat(7, 25px);
    grid-template-rows: 18px repeat(6, 23px);
    align-items: center;
    justify-items: center;
    font-size: 8px;
    color: #333;
}

.days .wd {
    font-size: 7px;
    color: #444;
}

.days .g {
    color: #9a9a9a;
}

.days .today {
    width: 23px;
    height: 23px;
    line-height: 19px;
    text-align: center;
    background: #0078d4;
    border: 2px solid #0078d4;
    outline: 1px solid #fff;
    outline-offset: -3px;
    color: #fff;
    font-weight: 700;
}

/* marks drawn on the calendars */
.box {
    position: absolute;
    border: 1px solid #000;
}

.m-feb1 { left: 398px; top: 473px; width: 49px; height: 23px; }
.m-feb2 { left: 300px; top: 495px; width: 120px; height: 24px; }
.m-feb3 { left: 299px; top: 520px; width: 72px; height: 44px; }
.m-mar1 { left: 465px; top: 494px; width: 46px; height: 23px; }
.m-mar2 { left: 493px; top: 522px; width: 46px; height: 21px; }
.m-mar3 { left: 493px; top: 542px; width: 117px; height: 44px; }
.m-solo { left: 308px; top: 630px; width: 147px; height: 40px; background: #fff; }

.red {
    position: absolute;
    color: #ff3b3b;
    white-space: nowrap;
    line-height: 12px;
}

.t-feb1 { left: 401px; top: 485px; font-size: 7.500px; }
.t-feb2 { left: 268px; top: 495px; font-size: 9.500px; }
.t-feb3 { left: 338px; top: 528px; font-size: 8.300px; }
.t-mar1 { left: 474px; top: 494px; font-size: 10.700px; }
.t-mar2 { left: 499px; top: 531px; font-size: 10px; }
.t-mar3 { left: 526px; top: 555px; font-size: 10px; }
.t-solo { left: 329px; top: 652px; font-size: 8.800px; }

/* sheet tabs */
.sheet-tabs {
    height: 27px;
    flex: none;
    display: flex;
    background: #333;
    border-top: 1px solid #4a4a4a;
    border-bottom: 1px solid #000;
    font-size: 11.500px;
    color: #8e8e8e;
}

.tab-arrows {
    width: 60px;
    display: flex;
    align-items: center;
    gap: 14px;
    padding-left: 14px;
    font-size: 9px;
    color: #5e5e5e;
}

.sheet-tabs a {
    width: 79px;
    display: flex;
    align-items: center;
    justify-content: center;
    background: #262626;
    border-left: 1px solid #3c3c3c;
}

.sheet-tabs a.active {
    width: 82px;
    border-left: none;
    background: #fff;
    color: #1e9b6f;
    height: 23px;
    box-shadow: 0 1px 0 #ddd;
}

.add {
    width: 38px;
    display: flex;
    align-items: center;
    justify-content: center;
    padding-left: 2px;
    background: #3a3a3a;
    border-right: 1px solid #2a2a2a;
    font-size: 17px;
    color: #d0d0d0;
}

/* status bar */
.status {
    height: 22px;
    flex: none;
    display: flex;
    align-items: center;
    padding-left: 25px;
    background: linear-gradient(#3b3b3b, #4a4a4a);
}

.ready {
    font-size: 11px;
    color: #d8d8d8;
}

.views {
    margin-left: auto;
    display: flex;
    height: 22px;
    margin-right: 10px;
}

.view {
    width: 36px;
    display: flex;
    align-items: center;
    justify-content: center;
}

.view.on {
    background: #5a5a5a;
}

.zoom {
    width: 198px;
    display: flex;
    align-items: center;
    color: #e8e8e8;
    font-size: 14px;
}

.zoom b {
    width: 9px;
    text-align: center;
    line-height: 14px;
}

.track {
    width: 100px;
    height: 4px;
    margin: 0 7px 0 5px;
    border-radius: 2px;
    background: #808080;
    position: relative;
}

.knob {
    position: absolute;
    left: 33px;
    top: -6px;
    width: 16px;
    height: 16px;
    border-radius: 50%;
    background: #a6a6a6;
}

.pct-z {
    margin-left: 17px;
    font-size: 12px;
    color: #cfcfcf;
}
```
